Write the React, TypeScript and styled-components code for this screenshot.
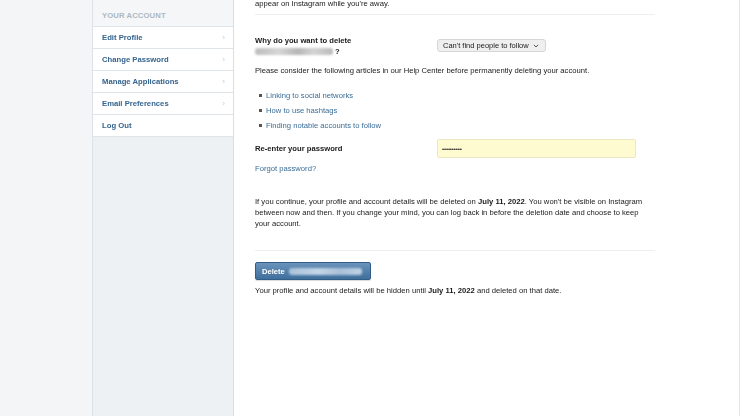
import styled, { createGlobalStyle } from 'styled-components';

const GlobalStyle = createGlobalStyle`
  html, body {
    margin: 0;
    padding: 0;
    height: 100%;
  }
  body {
    font-family: "Liberation Sans", Arial, sans-serif;
    background: #ffffff;
    color: #1a1a1a;
    -webkit-font-smoothing: antialiased;
  }
`;

const Page = styled.div`
  display: grid;
  grid-template-columns: 93px 141px 505px 1px;
  height: 416px;
  overflow: hidden;
`;

const Gutter = styled.div`
  background: #f3f5f7;
  border-right: 1px solid #dde2e7;
`;

const Sidebar = styled.nav`
  background: #eef1f4;
  border-right: 1px solid #d8dee4;
  display: flex;
  flex-direction: column;
`;

const SideHeader = styled.div`
  height: 27px;
  box-sizing: border-box;
  padding: 11px 0 0 9px;
  font-size: 7.7px;
  font-weight: bold;
  color: #aeb8c2;
  background: #f4f6f8;
  border-bottom: 1px solid #dfe4e9;
  letter-spacing: 0.1px;
`;

const SideItem = styled.a`
  display: flex;
  align-items: center;
  justify-content: space-between;
  height: 22px;
  box-sizing: border-box;
  padding: 0 8px 0 9px;
  background: #ffffff;
  border-bottom: 1px solid #dfe4e9;
  font-size: 7.7px;
  font-weight: bold;
  color: #35648f;
  text-decoration: none;
`;

const ItemLabel = styled.span`
  will-change: transform;
`;

const Chevron = styled.span`
  color: #d3d8dd;
  font-size: 8px;
`;

const Main = styled.main`
  padding: 0 84px 0 21px;
  font-size: 7.65px;
  color: #1a1a1a;
  will-change: transform;
`;

const Edge = styled.div`
  background: #e4e7ea;
`;

const Text = styled.p<{ $top?: number }>`
  margin: ${p => p.$top ?? 0}px 0 0;
  line-height: 11px;
`;

const Strong = styled.strong`
  font-weight: bold;
`;

const Rule = styled.hr<{ $top: number }>`
  margin: ${p => p.$top}px 0 0;
  border: 0;
  border-top: 1px solid #eeeeee;
  height: 0;
`;

const Row = styled.div<{ $top: number }>`
  display: grid;
  grid-template-columns: 182px 1fr;
  align-items: center;
  margin-top: ${p => p.$top}px;
`;

const Label = styled.div`
  font-weight: bold;
  line-height: 11px;
`;

const Redacted = styled.span<{ $w: number; $tone: 'grey' | 'blue' }>`
  display: inline-block;
  width: ${p => p.$w}px;
  height: 7px;
  border-radius: 3px;
  background: ${p =>
    p.$tone === 'grey'
      ? 'linear-gradient(90deg, #bdbdbd, #d6d6d6 30%, #b5b5b5 55%, #d4d4d4 75%, #bababa)'
      : 'linear-gradient(90deg, #aac2da, #c4d6e7 40%, #a9c1d9 70%, #c0d2e4)'};
  filter: blur(1.3px);
  vertical-align: middle;
  margin-right: 2px;
`;

const Select = styled.div`
  display: inline-flex;
  align-items: center;
  justify-content: space-between;
  width: 109px;
  height: 13px;
  box-sizing: border-box;
  padding: 0 6px 0 5px;
  background: #efefef;
  border: 1px solid #d6d6d6;
  border-radius: 3px;
  font-size: 7.5px;
  color: #1a1a1a;
  align-self: start;
  margin-top: 4px;
`;

const List = styled.ul`
  margin: 14px 0 0;
  padding: 0 0 0 11px;
  list-style: none;
`;

const Item = styled.li`
  position: relative;
  line-height: 11px;
  margin-bottom: 4px;
  color: #3a6d98;
  &::before {
    content: '';
    position: absolute;
    left: -7px;
    top: 4px;
    width: 3px;
    height: 3px;
    background: #555;
  }
`;

const Input = styled.div`
  width: 199px;
  height: 19px;
  box-sizing: border-box;
  background: #fffbd1;
  border: 1px solid #ebe6c4;
  border-radius: 2px;
  padding: 0 4px;
  display: flex;
  align-items: center;
  font-size: 6.2px;
  letter-spacing: -0.2px;
  color: #1a1a1a;
`;

const Link = styled.a`
  color: #3a6d98;
  text-decoration: none;
`;

const Button = styled.button`
  display: flex;
  align-items: center;
  gap: 4px;
  width: 116px;
  height: 18px;
  margin-top: 11px;
  padding: 0 6px;
  box-sizing: border-box;
  background: linear-gradient(#6a93bb, #3f6f9c);
  border: 1px solid #325d86;
  border-radius: 2px;
  color: #ffffff;
  font-family: inherit;
  font-size: 7.6px;
  font-weight: bold;
  box-shadow: 0 1px 1px rgba(0, 0, 0, 0.15);
`;

const ArrowDown = () => (
  <svg width="6" height="4" viewBox="0 0 6 4">
    <path d="M0.8 0.8 L3 3 L5.2 0.8" fill="none" stroke="#444" strokeWidth="0.9" />
  </svg>
);

const sideItems = [
  { label: 'Edit Profile', chevron: true },
  { label: 'Change Password', chevron: true },
  { label: 'Manage Applications', chevron: true },
  { label: 'Email Preferences', chevron: true },
  { label: 'Log Out', chevron: false },
];

const articles = [
  'Linking to social networks',
  'How to use hashtags',
  'Finding notable accounts to follow',
];

export default function App() {
  return (
    <>
      <GlobalStyle />
      <Page>
        <Gutter />
        <Sidebar>
          <SideHeader>YOUR ACCOUNT</SideHeader>
          {sideItems.map(item => (
            <SideItem key={item.label}>
              <ItemLabel>{item.label}</ItemLabel>
              {item.chevron && <Chevron>&#8250;</Chevron>}
            </SideItem>
          ))}
        </Sidebar>
        <Main>
          <Text $top={-2}>appear on Instagram while you're away.</Text>
          <Rule $top={5} />
          <Row $top={20}>
            <Label>
              Why do you want to delete
              <br />
              <Redacted $w={78} $tone="grey" />?
            </Label>
            <Select>
              Can't find people to follow
              <ArrowDown />
            </Select>
          </Row>
          <Text $top={8}>
            Please consider the following articles in our Help Center before permanently deleting your account.
          </Text>
          <List>
            {articles.map(a => (
              <Item key={a}>{a}</Item>
            ))}
          </List>
          <Row $top={8}>
            <Label>Re-enter your password</Label>
            <Input>••••••••••</Input>
          </Row>
          <Text $top={5}>
            <Link>Forgot password?</Link>
          </Text>
          <Text $top={22}>
            If you continue, your profile and account details will be deleted on <Strong>July 11, 2022</Strong>. You
            won't be visible on Instagram between now and then. If you change your mind, you can log back in before
            the deletion date and choose to keep your account.
          </Text>
          <Rule $top={21} />
          <Button>
            Delete
            <Redacted $w={80} $tone="blue" />
          </Button>
          <Text $top={5}>
            Your profile and account details will be hidden until <Strong>July 11, 2022</Strong> and deleted on that
            date.
          </Text>
        </Main>
        <Edge />
      </Page>
    </>
  );
}
